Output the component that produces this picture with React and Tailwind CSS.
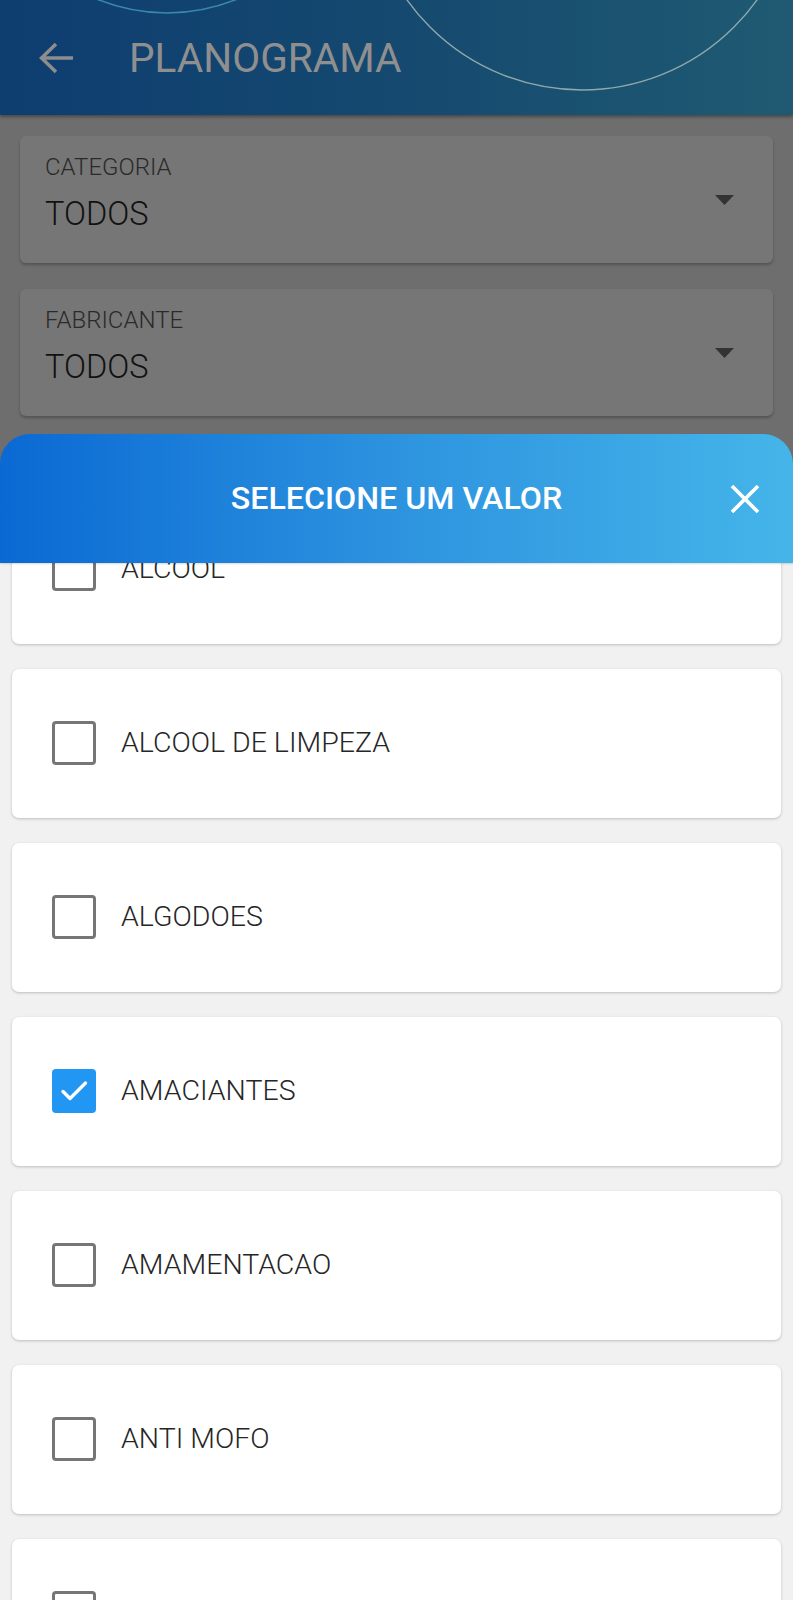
import React from "react";

const items = [
  { label: "ALCOOL", checked: false },
  { label: "ALCOOL DE LIMPEZA", checked: false },
  { label: "ALGODOES", checked: false },
  { label: "AMACIANTES", checked: true },
  { label: "AMAMENTACAO", checked: false },
  { label: "ANTI MOFO", checked: false },
  { label: "ANTISSEPTICOS", checked: false },
];

function Checkbox({ checked }) {
  if (checked) {
    return (
      <div className="w-[44px] h-[44px] shrink-0 rounded-[4px] bg-[#2196f3]">
        <svg width="44" height="44" viewBox="0 0 44 44" fill="none">
          <path d="M11 22.5 L18 29.5 L33.5 14" stroke="white" strokeWidth="3.4" strokeLinecap="round" strokeLinejoin="round" />
        </svg>
      </div>
    );
  }
  return <div className="w-[44px] h-[44px] shrink-0 rounded-[4px] border-[3px] border-[#767676] bg-white" />;
}

function SelectCard({ label }) {
  return (
    <div className="mx-[20px] h-[127px] rounded-[6px] bg-[#767676] shadow-[0_2px_3px_rgba(0,0,0,0.25)] flex items-center pl-[25px] pr-[39px]">
      <div className="flex-1 self-start pt-[16px]">
        <div className="h-[30px] leading-[30px] text-[24px] font-light text-[#2a2a2a]">{label}</div>
        <div className="mt-[12px] h-[40px] leading-[40px] text-[32.5px] font-light text-[#111111]">TODOS</div>
      </div>
      <svg width="19" height="10" viewBox="0 0 19 10">
        <path d="M0 0 L19 0 L9.5 10 Z" fill="#333333" />
      </svg>
    </div>
  );
}

export default function App() {
  return (
    <div
      className="relative w-[793px] h-[1600px] overflow-hidden bg-[#6e6e6e]"
      style={{ fontFamily: "Roboto, 'Liberation Sans', sans-serif" }}
    >
      {/* App bar */}
      <div className="relative h-[115px] bg-gradient-to-r from-[#0e3d70] via-[#15496f] to-[#1f5a72] shadow-[0_2px_3px_rgba(0,0,0,0.35)] flex items-center overflow-hidden">
        <svg className="absolute left-0 top-0" width="793" height="115" viewBox="0 0 793 115" fill="none">
          <circle cx="167" cy="-171" r="184" stroke="#3a89ad" strokeWidth="1.6" />
          <circle cx="582" cy="-125" r="215" stroke="#8ea8ae" strokeWidth="1.4" />
        </svg>
        <div className="relative ml-[39px] flex items-center">
          <svg width="34" height="32" viewBox="0 0 34 32" fill="none">
            <path d="M17 2 L2.5 16 L17 30 M2.5 16 L34 16" stroke="#8d8d8d" strokeWidth="3.6" strokeLinecap="butt" strokeLinejoin="miter" />
          </svg>
        </div>
        <div className="relative ml-[56px] text-[40.6px] leading-none text-[#8f8f8f] pt-[2px]">PLANOGRAMA</div>
      </div>

      {/* Form behind overlay */}
      <div className="pt-[21px] flex flex-col gap-[26px]">
        <SelectCard label="CATEGORIA" />
        <SelectCard label="FABRICANTE" />
      </div>

      {/* Bottom sheet modal */}
      <div className="absolute left-0 right-0 top-[434px] bottom-0 flex flex-col">
        <div className="relative z-10 h-[129px] shrink-0 rounded-t-[30px] bg-gradient-to-r from-[#0a69d3] via-[#2d93df] to-[#45b5e9] flex items-center justify-center shadow-[0_1px_2px_rgba(0,0,0,0.15)]">
          <div className="text-[32.2px] font-medium text-white leading-none">SELECIONE UM VALOR</div>
          <svg className="absolute right-[33px] top-[50px]" width="30" height="30" viewBox="0 0 30 30" fill="none">
            <path d="M2 2 L28 28 M28 2 L2 28" stroke="white" strokeWidth="3.6" />
          </svg>
        </div>
        <div className="flex-1 bg-[#f1f1f1] overflow-hidden">
          <div className="-mt-[68.5px] flex flex-col gap-[25px]">
            {items.map((it) => (
              <div
                key={it.label}
                className="mx-[12px] h-[149px] shrink-0 rounded-[7px] bg-white shadow-[0_1px_3px_rgba(0,0,0,0.22)] flex items-center pl-[40px]"
              >
                <Checkbox checked={it.checked} />
                <div className="ml-[25px] text-[28.5px] font-light text-[#262626] leading-none">{it.label}</div>
              </div>
            ))}
          </div>
        </div>
      </div>
    </div>
  );
}
